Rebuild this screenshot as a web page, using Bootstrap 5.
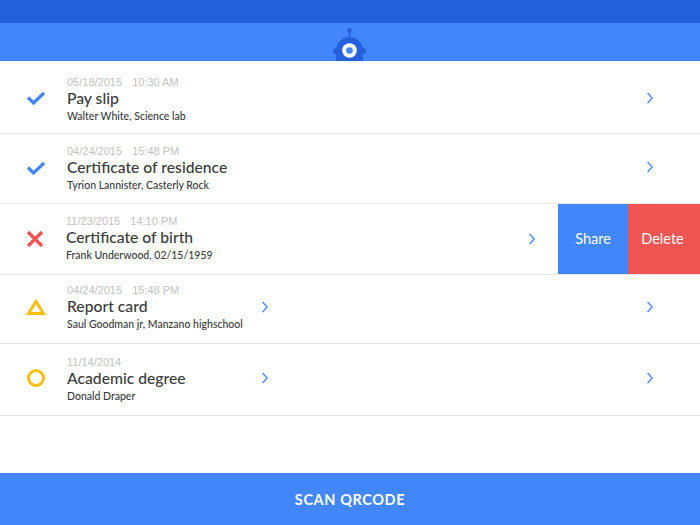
<!DOCTYPE html>
<html lang="en">
<head>
    <meta charset="UTF-8">
    <meta name="viewport" content="width=device-width, initial-scale=1.0">
    <title>Documents</title>
    <link rel="stylesheet" href="https://cdn.jsdelivr.net/npm/bootstrap@5.3.0/dist/css/bootstrap.min.css">
    <style>
        body {
            font-family: Lato, "Open Sans", sans-serif;
            background: #fff;
            height: 525px;
            overflow: hidden;
        }

        .statusStrip { height: 23px; background: #2560dc; }
        .topBar { height: 38px; background: #4286fc; }
        .topBar svg { display: block; }

        .docRow { border-bottom: 1px solid #e8e8e8; }
        .rowFirst { height: 73px; }
        .rowSecond { height: 70px; }
        .rowThird { height: 71px; }
        .rowFourth { height: 69px; }
        .rowFifth { height: 72px; }

        .docMain { padding-left: 26px; padding-right: 47px; }
        .rowShift { padding-left: 25px; padding-right: 0; }
        .docIcon { width: 20px; flex: none; margin-right: 21px; }
        .docBlockFirst { padding-top: 5px; }
        .docBlockFixed { flex: 0 0 195px; }
        .liftSmall { margin-bottom: 2px; }
        .liftMid { margin-bottom: 4px; }
        .dropSmall { margin-top: 2px; }
        .docDate { font-family: "Liberation Sans", Arial, sans-serif; font-size: 11px; line-height: 14px; color: #c2c2c2; }
        .docDate span { margin-left: 7px; }
        .docTitle { font-size: 15.7px; line-height: 18px; font-weight: 500; color: #3a3a3a; }
        .docSub { font-size: 10.5px; line-height: 16px; margin-top: 1px; color: #3a3a3a; font-weight: 500; }

        .chevShift { margin-right: 23px; }
        .swipeBtn { width: 70px; color: #fff; font-size: 14.5px; }
        .swipeShare { background: #4286fc; }
        .swipeDelete { background: #f15553; width: 72px; padding-right: 3px; }

        .scanBar {
            height: 52px;
            margin-top: 57px;
            padding-top: 1px;
            background: #4286fc;
            color: #fff;
            font-size: 14.5px;
            font-weight: 700;
            letter-spacing: .6px;
        }
    </style>
</head>

<body>
    <div class="statusStrip"></div>
    <div class="topBar d-flex justify-content-center align-items-end">
        <svg width="34" height="33" viewBox="0 0 34 33">
            <circle cx="16.5" cy="2.4" r="2.4" fill="#2560dc"/>
            <rect x="15.7" y="3" width="1.6" height="8" fill="#2560dc"/>
            <circle cx="3.2" cy="23" r="3.2" fill="#2560dc"/>
            <circle cx="29.8" cy="23" r="3.2" fill="#2560dc"/>
            <path d="M3 33V22.5a13.5 13.5 0 0 1 27 0V33Z" fill="#2560dc"/>
            <circle cx="16.5" cy="22.5" r="7.3" fill="#fff"/>
            <circle cx="16.5" cy="22.5" r="3.3" fill="#4286fc"/>
        </svg>
    </div>

    <!-- Pay slip -->
    <div class="docRow rowFirst docMain d-flex align-items-center">
        <svg class="docIcon dropSmall" height="14" viewBox="0 0 20 14"><path d="M2 6.5 7.5 12 18 2" fill="none" stroke="#4286fc" stroke-width="3.2"/></svg>
        <div class="docBlockFirst">
            <div class="docDate">05/18/2015 <span>10:30 AM</span></div>
            <div class="docTitle">Pay slip</div>
            <div class="docSub">Walter White, Science lab</div>
        </div>
        <svg class="ms-auto dropSmall" width="6" height="12" viewBox="0 0 6 12"><path d="M.6 1 5.2 6 .6 11" fill="none" stroke="#4286fc" stroke-width="1.3"/></svg>
    </div>

    <!-- Certificate of residence -->
    <div class="docRow rowSecond docMain d-flex align-items-center">
        <svg class="docIcon liftSmall" height="14" viewBox="0 0 20 14"><path d="M2 6.5 7.5 12 18 2" fill="none" stroke="#4286fc" stroke-width="3.2"/></svg>
        <div>
            <div class="docDate">04/24/2015 <span>15:48 PM</span></div>
            <div class="docTitle">Certificate of residence</div>
            <div class="docSub">Tyrion Lannister, Casterly Rock</div>
        </div>
        <svg class="ms-auto liftMid" width="6" height="12" viewBox="0 0 6 12"><path d="M.6 1 5.2 6 .6 11" fill="none" stroke="#4286fc" stroke-width="1.3"/></svg>
    </div>

    <!-- Certificate of birth, swiped open -->
    <div class="docRow rowThird docMain rowShift d-flex align-items-center">
        <svg class="docIcon" height="16" viewBox="0 0 20 16"><path d="M3 1 17 15M17 1 3 15" fill="none" stroke="#f15553" stroke-width="3.4"/></svg>
        <div class="liftSmall">
            <div class="docDate">11/23/2015 <span>14:10 PM</span></div>
            <div class="docTitle">Certificate of birth</div>
            <div class="docSub">Frank Underwood, 02/15/1959</div>
        </div>
        <svg class="ms-auto chevShift" width="6" height="12" viewBox="0 0 6 12"><path d="M.6 1 5.2 6 .6 11" fill="none" stroke="#4286fc" stroke-width="1.3"/></svg>
        <div class="swipeBtn swipeShare h-100 d-flex align-items-center justify-content-center">Share</div>
        <div class="swipeBtn swipeDelete h-100 d-flex align-items-center justify-content-center">Delete</div>
    </div>

    <!-- Report card -->
    <div class="docRow rowFourth docMain d-flex align-items-center">
        <svg class="docIcon liftMid" height="16" viewBox="0 0 20 16"><path d="M10 2.5 17.5 14.5H2.5Z" fill="none" stroke="#fdbf0f" stroke-width="3"/></svg>
        <div class="docBlockFixed liftMid">
            <div class="docDate">04/24/2015 <span>15:48 PM</span></div>
            <div class="docTitle">Report card</div>
            <div class="docSub">Saul Goodman jr, Manzano highschool</div>
        </div>
        <svg class="liftMid" width="6" height="12" viewBox="0 0 6 12"><path d="M.6 1 5.2 6 .6 11" fill="none" stroke="#4286fc" stroke-width="1.3"/></svg>
        <svg class="ms-auto liftMid" width="6" height="12" viewBox="0 0 6 12"><path d="M.6 1 5.2 6 .6 11" fill="none" stroke="#4286fc" stroke-width="1.3"/></svg>
    </div>

    <!-- Academic degree -->
    <div class="docRow rowFifth docMain d-flex align-items-center">
        <svg class="docIcon liftMid" height="18" viewBox="0 0 20 18"><circle cx="10" cy="9" r="7.5" fill="none" stroke="#fdbf0f" stroke-width="3"/></svg>
        <div class="docBlockFixed">
            <div class="docDate">11/14/2014</div>
            <div class="docTitle">Academic degree</div>
            <div class="docSub">Donald Draper</div>
        </div>
        <svg class="liftMid" width="6" height="12" viewBox="0 0 6 12"><path d="M.6 1 5.2 6 .6 11" fill="none" stroke="#4286fc" stroke-width="1.3"/></svg>
        <svg class="ms-auto liftMid" width="6" height="12" viewBox="0 0 6 12"><path d="M.6 1 5.2 6 .6 11" fill="none" stroke="#4286fc" stroke-width="1.3"/></svg>
    </div>

    <div class="scanBar d-flex align-items-center justify-content-center">SCAN QRCODE</div>

    <script src="https://cdn.jsdelivr.net/npm/bootstrap@5.3.0/dist/js/bootstrap.bundle.min.js"></script>
</body>

</html>
